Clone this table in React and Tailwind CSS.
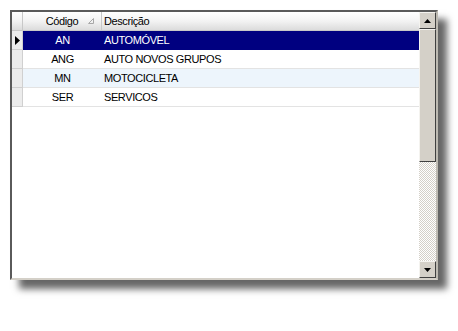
import React from "react";

const rows = [
	{ code: "AN", desc: "AUTOMÓVEL" },
	{ code: "ANG", desc: "AUTO NOVOS GRUPOS" },
	{ code: "MN", desc: "MOTOCICLETA" },
	{ code: "SER", desc: "SERVICOS" },
];

const selected = 0;

function ArrowButton({ down }) {
	return (
		<div className="h-[17px] w-[17px] shrink-0 flex items-center justify-center bg-[#d4d0c8] border border-t-[#f4f3ef] border-l-[#f4f3ef] border-b-[#404040] border-r-[#404040]">
			<svg width="7" height="4" viewBox="0 0 7 4">
				{down ? (
					<path d="M0 0h7L3.5 4z" fill="#000" />
				) : (
					<path d="M0 4h7L3.5 0z" fill="#000" />
				)}
			</svg>
		</div>
	);
}

export default function App() {
	return (
		<div className="min-h-screen bg-white p-[10px] font-['Liberation_Sans',Arial,sans-serif] text-[11px] tracking-[-0.4px] text-black">
			{/* grid frame */}
			<div className="w-[428px] h-[270px] flex bg-white border-2 border-t-[#5a5a5a] border-l-[#5a5a5a] border-b-[#d4d0c8] border-r-[#bdbab2] shadow-[9px_9px_7px_rgba(0,0,0,0.6)]">
				<div className="flex-1 flex flex-col min-w-0">
					{/* header */}
					<div className="flex h-[19px] shrink-0 bg-gradient-to-b from-[#ffffff] via-[#f3f3f3] to-[#dcdcdc] border-b border-[#c8c8c8]">
						<div className="w-[11px] border-r border-[#c8c8c8]" />
						<div className="w-[79px] relative flex items-center justify-center border-r border-[#c8c8c8]">
							<span>Código</span>
							<svg className="absolute right-[7px] top-[6px]" width="6" height="6" viewBox="0 0 6 6">
								<path d="M5.5 0.5V5.5H0.5z" fill="none" stroke="#a8a8a8" strokeWidth="1" />
							</svg>
						</div>
						<div className="flex-1 flex items-center pl-[2px]">Descrição</div>
					</div>

					{/* rows */}
					{rows.map((r, i) => {
						const isSel = i === selected;
						const bg = isSel
							? "bg-[#000080] text-white"
							: i % 2 === 0
							? "bg-[#edf5fc]"
							: "bg-white";
						return (
							<div key={r.code} className="flex h-[19px] shrink-0">
								<div className="w-[11px] flex items-center justify-center bg-[#ececec] border-r border-b border-[#d0d0d0]">
									{isSel && (
										<svg width="5" height="9" viewBox="0 0 5 9">
											<path d="M0 0L5 4.5L0 9z" fill="#000" />
										</svg>
									)}
								</div>
								<div className={`flex-1 flex ${bg} ${isSel ? "" : "border-b border-[#e3e3e3]"}`}>
									<div className="w-[79px] flex items-center justify-center">{r.code}</div>
									<div className="flex-1 flex items-center pl-[2px]">{r.desc}</div>
								</div>
							</div>
						);
					})}
				</div>

				{/* vertical scrollbar */}
				<div className="w-[17px] flex flex-col shrink-0">
					<ArrowButton />
					<div className="h-[133px] shrink-0 bg-[#d4d0c8] border border-t-[#f4f3ef] border-l-[#f4f3ef] border-b-[#404040] border-r-[#404040]" />
					<div className="flex-1 bg-[repeating-conic-gradient(#d4d0c8_0%_25%,#ffffff_0%_50%)] bg-[length:2px_2px]" />
					<ArrowButton down />
				</div>
			</div>
		</div>
	);
}
